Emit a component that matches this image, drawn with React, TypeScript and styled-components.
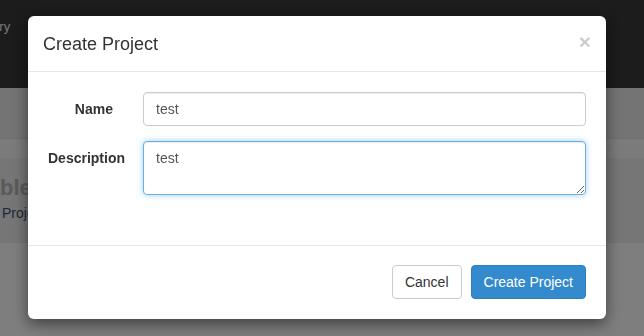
import React from "react";
import styled, { createGlobalStyle } from "styled-components";

const Global = createGlobalStyle`
  html, body { margin: 0; padding: 0; }
  body {
    font-family: "Liberation Sans", Arial, Helvetica, sans-serif;
    width: 644px;
    height: 336px;
    overflow: hidden;
    background: #fcfcfc;
  }
  * { box-sizing: border-box; }
`;

const Page = styled.div`
  width: 644px;
  height: 336px;
  display: flex;
  flex-direction: column;
  background: #fcfcfc;
  overflow: hidden;
`;

const Navbar = styled.div`
  height: 88px;
  background: #383838;
  display: flex;
  align-items: flex-start;
  padding-top: 18px;
`;

const NavLink = styled.span`
  font-size: 13px;
  line-height: 18px;
  color: #eeeeee;
  margin-left: -31px;
  white-space: nowrap;
`;

const SubBar = styled.div`
  height: 51px;
  background: #e8e8e8;
  border-bottom: 1px solid #dcdcdc;
`;

const Spacer = styled.div`
  height: 19px;
  background: #f6f6f6;
`;

const Panel = styled.div`
  height: 85px;
  background: #ececec;
  padding-top: 18px;
  overflow: hidden;
`;

const PanelTitle = styled.h2`
  margin: 0 0 3px -64px;
  font-size: 22px;
  line-height: 24px;
  font-weight: bold;
  color: #b4b4b4;
  white-space: nowrap;
`;

const PanelText = styled.div`
  font-size: 14px;
  line-height: 20px;
  color: #3c5070;
  padding-left: 2px;
  white-space: nowrap;
`;

const Backdrop = styled.div`
  position: fixed;
  inset: 0;
  background: rgba(0, 0, 0, 0.5);
`;

const Modal = styled.div`
  position: fixed;
  top: 16px;
  left: 28px;
  width: 578px;
  height: 303px;
  background: #fff;
  border-radius: 6px;
  box-shadow: 0 5px 15px rgba(0, 0, 0, 0.5);
  display: flex;
  flex-direction: column;
  overflow: hidden;
`;

const Header = styled.div`
  height: 56px;
  padding: 0 15px;
  border-bottom: 1px solid #e5e5e5;
  display: flex;
  align-items: center;
  justify-content: space-between;
`;

const Title = styled.h4`
  margin: 0;
  font-size: 18px;
  line-height: 20px;
  font-weight: normal;
  color: #333;
  padding-top: 1px;
`;

const Close = styled.button`
  border: 0;
  background: transparent;
  padding: 0;
  margin-top: -4px;
  font-family: "Liberation Sans", Arial, sans-serif;
  font-size: 21px;
  font-weight: bold;
  line-height: 1;
  color: #000;
  opacity: 0.2;
  cursor: pointer;
`;

const Body = styled.div`
  height: 173px;
  padding: 20px;
  display: flex;
  flex-direction: column;
  gap: 15px;
`;

const Row = styled.div`
  display: grid;
  grid-template-columns: 65px 443px;
  column-gap: 30px;
  align-items: start;
`;

const Label = styled.label`
  padding-top: 7px;
  font-size: 14px;
  line-height: 20px;
  font-weight: bold;
  color: #333;
  text-align: right;
  white-space: nowrap;
`;

const TextInput = styled.input`
  width: 100%;
  height: 34px;
  padding: 6px 12px;
  font-family: inherit;
  font-size: 14px;
  line-height: 20px;
  color: #555;
  background: #fff;
  border: 1px solid #ccc;
  border-radius: 4px;
  box-shadow: inset 0 1px 1px rgba(0, 0, 0, 0.075);
  outline: none;
`;

const TextArea = styled.textarea<{ $focused?: boolean }>`
  width: 100%;
  height: 54px;
  padding: 6px 12px;
  font-family: inherit;
  font-size: 14px;
  line-height: 20px;
  color: #555;
  background: #fff;
  border: 1px solid ${(p) => (p.$focused ? "#66afe9" : "#ccc")};
  border-radius: 4px;
  box-shadow: ${(p) =>
    p.$focused
      ? "inset 0 1px 1px rgba(0,0,0,.075), 0 0 6px rgba(102,175,233,.6)"
      : "inset 0 1px 1px rgba(0,0,0,.075)"};
  outline: none;
  display: block;
  resize: vertical;
`;

const Footer = styled.div`
  flex: 1;
  border-top: 1px solid #e5e5e5;
  padding: 19px 20px 20px;
  display: flex;
  justify-content: flex-end;
  align-items: flex-start;
  gap: 9px;
`;

const Button = styled.button<{ $primary?: boolean }>`
  height: 34px;
  padding: 6px 12px;
  font-family: inherit;
  font-size: 14px;
  line-height: 20px;
  border-radius: 4px;
  border: 1px solid ${(p) => (p.$primary ? "#2b7fc0" : "#ccc")};
  background: ${(p) => (p.$primary ? "#338bcd" : "#fff")};
  color: ${(p) => (p.$primary ? "#fff" : "#333")};
  cursor: pointer;
  white-space: nowrap;
`;

export default function App() {
  return (
    <>
      <Global />
      <Page>
        <Navbar>
          <NavLink>Gallery</NavLink>
        </Navbar>
        <SubBar />
        <Spacer />
        <Panel>
          <PanelTitle>Available Projects</PanelTitle>
          <PanelText>Projects you can open</PanelText>
        </Panel>
      </Page>
      <Backdrop />
      <Modal>
        <Header>
          <Title>Create Project</Title>
          <Close aria-label="Close">×</Close>
        </Header>
        <Body>
          <Row>
            <Label>Name</Label>
            <TextInput defaultValue="test" />
          </Row>
          <Row>
            <Label>Description</Label>
            <TextArea $focused defaultValue="test" />
          </Row>
        </Body>
        <Footer>
          <Button>Cancel</Button>
          <Button $primary>Create Project</Button>
        </Footer>
      </Modal>
    </>
  );
}
